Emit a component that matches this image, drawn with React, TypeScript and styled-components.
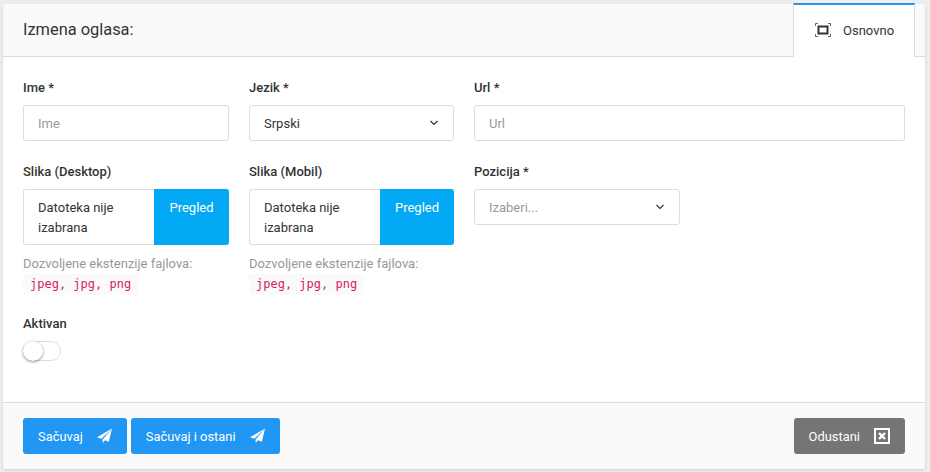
import React from "react";
import styled, { createGlobalStyle } from "styled-components";

const GlobalStyle = createGlobalStyle`
  html, body {
    margin: 0;
    padding: 0;
    background: #eeeeee;
    font-family: Roboto, "Liberation Sans", sans-serif;
    color: #333333;
  }
  * { box-sizing: border-box; }
`;

const Page = styled.div`
  width: 930px;
  height: 472px;
  padding: 4px 5px 3px 3px;
  overflow: hidden;
`;

const Card = styled.div`
  height: 465px;
  background: #fff;
  border-radius: 3px;
  box-shadow: 0 1px 3px rgba(0, 0, 0, 0.14);
  display: flex;
  flex-direction: column;
`;

const Header = styled.div`
  height: 53px;
  flex: none;
  background: #fafafa;
  border-bottom: 1px solid #dddddd;
  border-radius: 3px 3px 0 0;
  display: flex;
  align-items: stretch;
  justify-content: space-between;
  padding: 0 10px 0 20px;
`;

const Title = styled.h5`
  margin: 0;
  font-size: 16.4px;
  font-weight: 400;
  line-height: 51px;
  color: #333;
`;

const Tab = styled.div`
  width: 122px;
  height: 54px;
  margin-top: -1px;
  background: #fff;
  border-top: 2px solid #2196f3;
  border-left: 1px solid #dddddd;
  border-right: 1px solid #dddddd;
  display: flex;
  align-items: center;
  gap: 12px;
  padding: 0 0 2px 21px;
  font-size: 13px;
  color: #333;
`;

const Body = styled.div`
  flex: 1;
  padding: 20px 20px 0;
`;

const Grid = styled.div`
  display: grid;
  grid-template-columns: 206px 205px 431px;
  column-gap: 20px;
`;

const Field = styled.div<{ $tall?: boolean }>`
  display: flex;
  flex-direction: column;
  margin-bottom: ${(p) => (p.$tall ? "18px" : "20px")};
`;

const Label = styled.label`
  display: block;
  font-size: 13px;
  font-weight: 500;
  line-height: 20px;
  height: 20px;
  padding-top: 1px;
  margin-bottom: 8px;
  color: #333;
`;

const Input = styled.div<{ $placeholder?: boolean; $narrow?: boolean }>`
  height: 36px;
  width: ${(p) => (p.$narrow ? "206px" : "auto")};
  border: 1px solid #dddddd;
  border-radius: 3px;
  padding: 0 14px;
  display: flex;
  align-items: center;
  justify-content: space-between;
  font-size: 13px;
  color: ${(p) => (p.$placeholder ? "#999999" : "#333333")};
`;

const FileBox = styled.div`
  height: 56px;
  display: flex;
`;

const FileName = styled.div`
  width: 131px;
  flex: none;
  padding: 8px 14px;
  border: 1px solid #dddddd;
  border-right: 0;
  border-radius: 3px 0 0 3px;
  font-size: 13px;
  line-height: 20px;
  color: #333;
`;

const Browse = styled.div`
  flex: 1;
  padding-top: 10px;
  text-align: center;
  background: #03a9f4;
  border-radius: 0 3px 3px 0;
  color: #fff;
  font-size: 13px;
  line-height: 18px;
`;

const Hint = styled.div`
  margin-top: 10px;
  font-size: 13px;
  line-height: 18px;
  color: #999999;
`;

const Extensions = styled.code`
  align-self: flex-start;
  margin-top: 1px;
  padding: 2px 7px;
  background: #fafafa;
  border-radius: 2px;
  color: #d81b60;
  font-family: "DejaVu Sans Mono", "Liberation Mono", monospace;
  font-size: 12px;
  line-height: 17px;
`;

const Toggle = styled.div`
  position: relative;
  width: 38px;
  height: 20px;
  margin-top: 2px;
  border: 1px solid #dddddd;
  border-radius: 10px;
  background: #fff;
`;

const Knob = styled.span`
  position: absolute;
  left: -1px;
  top: -1px;
  width: 20px;
  height: 20px;
  border-radius: 50%;
  background: #fff;
  box-shadow: 0 1px 3px rgba(0, 0, 0, 0.45);
`;

const Footer = styled.div`
  height: 67px;
  flex: none;
  background: #fafafa;
  border-top: 1px solid #dddddd;
  border-radius: 0 0 3px 3px;
  padding: 15px 20px;
  display: flex;
  align-items: flex-start;
  gap: 4px;
`;

const Button = styled.button<{ $grey?: boolean }>`
  height: 36px;
  border: 0;
  border-radius: 3px;
  padding: 0 15px;
  display: flex;
  align-items: center;
  gap: 14px;
  background: ${(p) => (p.$grey ? "#757575" : "#2196f3")};
  color: #fff;
  font-family: inherit;
  font-size: 12.9px;
  margin-left: ${(p) => (p.$grey ? "auto" : "0")};
`;

const FrameIcon = () => (
  <svg width="16" height="14" viewBox="0 0 16 14" fill="none" stroke="#333">
    <rect x="3.500" y="3.500" width="9" height="7" strokeWidth="2" />
    <path d="M.5 3V.5H3M13 .5h2.500V3M15.500 11v2.500H13M3 13.500H.5V11" strokeWidth="1" opacity=".75" />
  </svg>
);

const Chevron = () => (
  <svg width="10" height="6" viewBox="0 0 10 6" fill="none" stroke="#333" strokeWidth="1.2">
    <path d="M1.500 1l3.500 3.500L8.500 1" />
  </svg>
);

const PlaneIcon = () => (
  <svg width="15" height="16" viewBox="0 0 16 16" fill="#fff">
    <path d="M16 0L0 9.300l4.600 1.600z" />
    <path d="M16 0L6 11.600v3.900l2.500-2.900 4.100 1.400z" />
  </svg>
);

const CloseIcon = () => (
  <svg width="16" height="16" viewBox="0 0 16 16">
    <rect x="1" y="1" width="14" height="14" fill="none" stroke="#fff" strokeWidth="2" />
    <path d="M5 5l6 6M11 5l-6 6" fill="none" stroke="#fff" strokeWidth="2.400" />
  </svg>
);

const ExtensionHelp = () => (
  <>
    <Hint>Dozvoljene ekstenzije fajlova:</Hint>
    <Extensions>jpeg, jpg, png</Extensions>
  </>
);

export default function App() {
  return (
    <>
      <GlobalStyle />
      <Page>
        <Card>
          <Header>
            <Title>Izmena oglasa:</Title>
            <Tab>
              <FrameIcon />
              Osnovno
            </Tab>
          </Header>
          <Body>
            <Grid>
              <Field>
                <Label>Ime *</Label>
                <Input $placeholder>Ime</Input>
              </Field>
              <Field>
                <Label>Jezik *</Label>
                <Input>
                  Srpski
                  <Chevron />
                </Input>
              </Field>
              <Field>
                <Label>Url *</Label>
                <Input $placeholder>Url</Input>
              </Field>
              <Field $tall>
                <Label>Slika (Desktop)</Label>
                <FileBox>
                  <FileName>Datoteka nije izabrana</FileName>
                  <Browse>Pregled</Browse>
                </FileBox>
                <ExtensionHelp />
              </Field>
              <Field $tall>
                <Label>Slika (Mobil)</Label>
                <FileBox>
                  <FileName>Datoteka nije izabrana</FileName>
                  <Browse>Pregled</Browse>
                </FileBox>
                <ExtensionHelp />
              </Field>
              <Field $tall>
                <Label>Pozicija *</Label>
                <Input $placeholder $narrow>
                  Izaberi...
                  <Chevron />
                </Input>
              </Field>
            </Grid>
            <Label>Aktivan</Label>
            <Toggle>
              <Knob />
            </Toggle>
          </Body>
          <Footer>
            <Button>
              Sačuvaj
              <PlaneIcon />
            </Button>
            <Button>
              Sačuvaj i ostani
              <PlaneIcon />
            </Button>
            <Button $grey>
              Odustani
              <CloseIcon />
            </Button>
          </Footer>
        </Card>
      </Page>
    </>
  );
}
